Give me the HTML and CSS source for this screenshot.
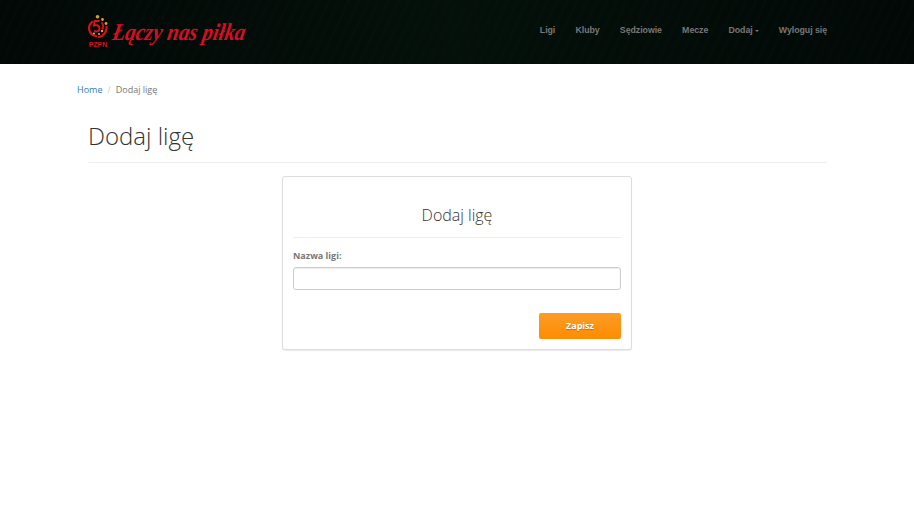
FILE: index.html
```html
<!DOCTYPE html>
<html lang="pl">
<head>
<meta charset="utf-8">
<title>Dodaj ligę</title>
<link rel="stylesheet" href="styles.css">
</head>
<body>
<header class="navbar">
  <a class="brand" href="#">
    <span class="crest">
      <svg class="crest-icon" width="20" height="25" viewBox="0 0 20 25" aria-hidden="true">
        <g fill="none" stroke="#d8101c" stroke-linecap="round">
          <path stroke-width="2" d="M11 6 H6.5 L6 10.5 C8.5 9.5 11.5 10.5 11.5 13.5 C11.5 16 9 17 7 16"/>
          <path stroke-width="2.2" d="M4 7 C1.5 9 0.8 12 1.2 14.5 C1.8 18 4.5 20.5 8 21"/>
          <path stroke-width="2" d="M14 8 C15.5 10 15.5 11.5 14.5 13.5"/>
          <path stroke-width="2.2" d="M18.5 12 C19 16 16 21 11 22"/>
        </g>
        <g fill="#d3a51f">
          <circle cx="9.5" cy="1.8" r="1.8"/>
          <circle cx="14.5" cy="4.5" r="1.4"/>
          <circle cx="18" cy="8.5" r="1.4"/>
          <circle cx="14" cy="16" r="1.2"/>
          <circle cx="6" cy="18.5" r="1.1"/>
          <circle cx="11" cy="19" r="1.1"/>
        </g>
      </svg>
      <span class="crest-name">PZPN</span>
    </span>
    <span class="slogan">Łączy nas piłka</span>
  </a>
  <nav class="menu">
    <a href="#">Ligi</a>
    <a href="#">Kluby</a>
    <a href="#">Sędziowie</a>
    <a href="#">Mecze</a>
    <a href="#" class="dropdown">Dodaj<span class="caret"></span></a>
    <a href="#">Wyloguj się</a>
  </nav>
</header>

<main class="page">
  <ol class="breadcrumb">
    <li><a href="#">Home</a></li>
    <li class="sep">/</li>
    <li class="current">Dodaj ligę</li>
  </ol>

  <h1 class="page-title">Dodaj ligę</h1>

  <form class="card">
    <h2 class="card-title">Dodaj ligę</h2>
    <label class="field-label" for="nazwa">Nazwa ligi:</label>
    <input class="field-input" id="nazwa" type="text">
    <div class="actions">
      <button class="btn-save" type="button">Zapisz</button>
    </div>
  </form>
</main>
</body>
</html>
```

FILE: styles.css
```css
* { box-sizing: border-box; }

html, body { margin: 0; height: 100%; }

body {
  background: #fff;
  font-family: "Open Sans", "Liberation Sans", sans-serif;
  color: #333;
  overflow: hidden;
}

a { text-decoration: none; }

.navbar {
  height: 64px;
  display: flex;
  justify-content: space-between;
  padding: 0 87px 0 88px;
  background-color: #030b07;
  background-image:
    repeating-linear-gradient(115deg, rgba(20, 50, 35, 0.05) 0 3px, transparent 3px 9px),
    linear-gradient(90deg, #020806, #04100a 50%, #020806);
}

.brand {
  display: flex;
  align-items: flex-start;
  gap: 5px;
  padding-top: 15px;
}

.crest {
  display: flex;
  flex-direction: column;
  align-items: center;
  width: 20px;
}

.crest-icon { display: block; }

.crest-name {
  font: bold 7px/8px "Liberation Sans", sans-serif;
  color: #d8101c;
  margin-top: 1px;
}

.slogan {
  display: block;
  margin-top: 2px;
  font: italic bold 24px/30px "Liberation Serif", serif;
  color: #d90d22;
  white-space: nowrap;
  transform: skewX(-10deg) scaleX(0.865);
  transform-origin: left center;
}

.menu {
  display: flex;
  align-items: flex-start;
  gap: 20.2px;
  padding-top: 24px;
}

.menu a {
  font: bold 8.8px/12px "Liberation Sans", sans-serif;
  letter-spacing: -0.05px;
  color: #777;
}

.caret {
  display: inline-block;
  margin-left: 2px;
  vertical-align: middle;
  border-top: 2px solid #777;
  border-left: 2px solid transparent;
  border-right: 2px solid transparent;
}

.page { padding: 0 87px 0 88px; }

.breadcrumb {
  list-style: none;
  margin: 0 0 0 -11px;
  padding: 20px 0 0;
  display: flex;
  gap: 5px;
  font: 9px/12px "Open Sans", sans-serif;
  height: 32px;
}

.breadcrumb a { color: #337ab7; }
.breadcrumb .sep { color: #ccc; }
.breadcrumb .current { color: #777; }

.page-title {
  margin: 24px 0 14px;
  padding-bottom: 10px;
  font: 300 24px/32px "Open Sans", sans-serif;
  color: #333;
  border-bottom: 1px solid #eee;
}

.card {
  width: 350px;
  height: 174px;
  margin: -1px 0 0 194px;
  padding: 0 10px;
  border: 1px solid #ddd;
  border-radius: 3px;
  box-shadow: 0 1px 1px rgba(0, 0, 0, 0.08);
  background: #fff;
}

.card-title {
  margin: 0 0 12px;
  padding: 26px 0 10px;
  height: 61px;
  font: 300 16px/24px "Open Sans", sans-serif;
  text-align: center;
  color: #333;
  border-bottom: 1px solid #eee;
}

.field-label {
  display: block;
  font: bold 9px/12px "Open Sans", "Liberation Sans", sans-serif;
  color: #777;
  margin-bottom: 5px;
}

.field-input {
  display: block;
  width: 100%;
  height: 23px;
  border: 1px solid #ccc;
  border-radius: 3px;
  box-shadow: inset 0 1px 1px rgba(0, 0, 0, 0.075);
  background: #fff;
}

.actions {
  display: flex;
  justify-content: flex-end;
  margin-top: 23px;
}

.btn-save {
  width: 82px;
  height: 26px;
  padding: 0;
  border: 0;
  border-radius: 2px;
  background: linear-gradient(#fb9c28, #ff8c00);
  font: bold 9px/26px "Open Sans", "Liberation Sans", sans-serif;
  color: #fff;
  text-shadow: 0 1px 1px rgba(0, 0, 0, 0.25);
}
```
